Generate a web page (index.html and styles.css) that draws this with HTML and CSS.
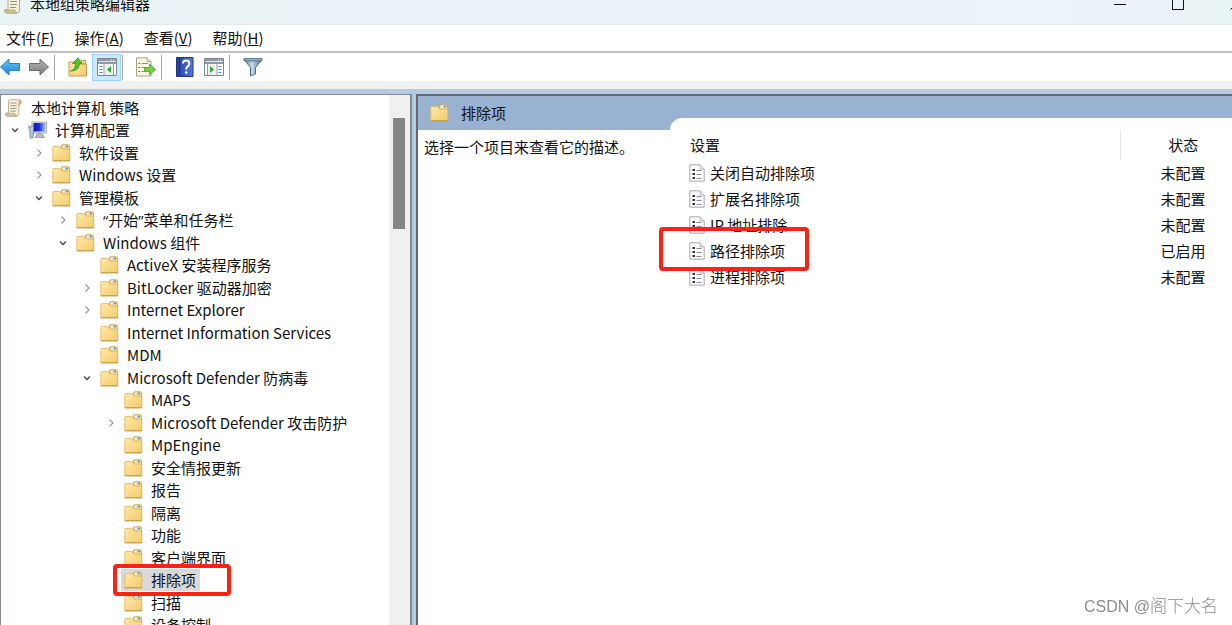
FILE: index.html
```html
<!DOCTYPE html>
<html lang="zh-CN">
<head>
  <meta charset="UTF-8" />
  <title>本地组策略编辑器</title>
  <link rel="stylesheet" href="styles.css">
</head>
<body>

<svg class="sprite" aria-hidden="true">
  <defs>
    <linearGradient id="gFolder" x1="0" y1="0" x2="1" y2="1">
      <stop offset="0" stop-color="#ffe9a8" />
      <stop offset="1" stop-color="#f3cb6c" />
    </linearGradient>
    <linearGradient id="gBlue" x1="0" y1="0" x2="0" y2="1">
      <stop offset="0" stop-color="#6cc8f8" />
      <stop offset="1" stop-color="#1583d6" />
    </linearGradient>
    <linearGradient id="gGray" x1="0" y1="0" x2="0" y2="1">
      <stop offset="0" stop-color="#b5b5b5" />
      <stop offset="1" stop-color="#7c7c7c" />
    </linearGradient>
    <linearGradient id="gHelp" x1="0" y1="0" x2="1" y2="0">
      <stop offset="0" stop-color="#243f9c" />
      <stop offset="1" stop-color="#4f7ae0" />
    </linearGradient>
    <linearGradient id="gScreen" x1="0" y1="0" x2="1" y2="0">
      <stop offset="0" stop-color="#0a12b4" />
      <stop offset="0.5" stop-color="#1d32e0" />
      <stop offset="1" stop-color="#a9c6fb" />
    </linearGradient>
    <linearGradient id="gFunnel" x1="0" y1="0" x2="1" y2="0">
      <stop offset="0" stop-color="#5d7f99" />
      <stop offset="0.45" stop-color="#c5dbe8" />
      <stop offset="1" stop-color="#4a6b85" />
    </linearGradient>
  </defs>
  <symbol id="folder" viewBox="0 0 19 18">
    <path d="M9.500 5 V1.500 Q9.500 .8 10.500 .8 H16 Q17.500 .8 17.500 2.500 V16 H9.500Z" fill="#f3d58c" stroke="#cda659" />
    <path d="M11 2.500 H16" stroke="#fff" stroke-width="1.600" />
    <path d="M13.500 2.500 H16" stroke="#3d93df" stroke-width="1.600" />
    <path d="M.8 3.500 Q.8 2.500 2 2.500 H8 L10 5.200 H17.800 V16.800 H.8Z" fill="url(#gFolder)" stroke="#deb662" stroke-width=".8" />
    <path d="M1 16.800 H18" stroke="#bf9442" />
  </symbol>
  <symbol id="scroll" viewBox="0 0 19 20">
    <path d="M4 2.500 Q4 .8 6 .8 H16 Q18.300 1 18 4 Q17.700 6 15.500 5.800 V16 Q15.500 19 12.500 19 H3 Q.5 19 .7 16 L4 15.500Z" fill="#f7f1d9" stroke="#b8aa83" />
    <path d="M15.500 6 V3 Q15.800 1 17 1.500 Q18.600 2.500 17.500 5 Q17 6 15.500 6Z" fill="#d3c093" stroke="#a9976b" stroke-width=".7" />
    <path d="M.7 16 H11 Q11 19 13 19 H3 Q.5 19 .7 16Z" fill="#d6c79b" stroke="#a9976b" stroke-width=".7" />
    <path d="M6 4.500 H13 M6 7.500 H13 M6 10.500 H13 M6 13.500 H12" stroke="#8f8f8f" />
  </symbol>
  <symbol id="computer" viewBox="0 0 19 18">
    <path d="M4 1 H18.500 V12 H4Z" fill="#dbe2ea" stroke="#9aa5b1" stroke-width=".8" />
    <path d="M5.500 2 H17.500 V10.500 H5.500Z" fill="url(#gScreen)" />
    <path d="M9 12.500 H14 L16.500 16.500 H7Z" fill="#b4bbc3" stroke="#878f98" stroke-width=".7" />
    <path d="M1 5 L2.500 6.500 L4 4.500 Q6.500 6 5.500 9 L5 16.500 Q3.500 18 2 16.500 L2 9 Q0 7.500 1 5Z" fill="#b3cce2" stroke="#57738f" stroke-width=".8" />
  </symbol>
  <symbol id="policy" viewBox="0 0 16 18">
    <path d="M.8 .8 H11 L15.200 5 V17.200 H.8Z" fill="#fafafa" stroke="#a8a8a8" />
    <path d="M11 1 V5 H15" fill="#e8e8e8" stroke="#b0b0b0" stroke-width=".8" />
    <path d="M3.500 5 H6 V7 H3.500Z M3.500 9 H6 V11 H3.500Z M3.500 13 H6 V15 H3.500Z" fill="#333" />
    <path d="M7.500 6.500 H12.500 M7.500 10.500 H12.500 M7.500 14.500 H12.500" stroke="#8c8c96" />
  </symbol>
  <symbol id="right" viewBox="0 0 16 16">
    <path d="M6.500 4.500 L10 8 L6.500 11.500" fill="none" stroke="#9a9a9a" stroke-width="1.200" />
  </symbol>
  <symbol id="down" viewBox="0 0 16 16">
    <path d="M5 6.500 L8 9.500 L11 6.500" fill="none" stroke="#444" stroke-width="1.300" />
  </symbol>
</svg>

<header class="title-bar">
  <svg class="app-icon"><use href="#scroll" /></svg>
  <h1 class="title">本地组策略编辑器</h1>
  <div class="caption-buttons">
    <button class="caption-btn" aria-label="最小化"><svg width="14" height="14" viewBox="0 0 14 14"><path d="M1 7.500 H13" stroke="#111" /></svg></button>
    <button class="caption-btn" aria-label="最大化"><svg width="14" height="14" viewBox="0 0 14 14"><rect x="1.500" y="1.500" width="11" height="11" fill="none" stroke="#111" /></svg></button>
    <button class="caption-btn" aria-label="关闭"><svg width="14" height="14" viewBox="0 0 14 14"><path d="M1.500 1.500 L12.500 12.500 M12.500 1.500 L1.500 12.500" stroke="#111" /></svg></button>
  </div>
</header>

<nav class="menu-bar">
  <button class="menu-btn">文件(<u>F</u>)</button>
  <button class="menu-btn">操作(<u>A</u>)</button>
  <button class="menu-btn">查看(<u>V</u>)</button>
  <button class="menu-btn">帮助(<u>H</u>)</button>
</nav>

<div class="toolbar">
  <button class="tool-btn" aria-label="后退">
    <svg width="22" height="20" viewBox="0 0 22 20"><path d="M1.500 10 L10 2 V6.500 H20.500 V13.500 H10 V18Z" fill="url(#gBlue)" stroke="#2a7fc0" /></svg>
  </button>
  <button class="tool-btn" aria-label="前进">
    <svg width="22" height="20" viewBox="0 0 22 20"><path d="M20.500 10 L12 2 V6.500 H1.500 V13.500 H12 V18Z" fill="url(#gGray)" stroke="#6c6c6c" /></svg>
  </button>
  <span class="separator"></span>
  <button class="tool-btn" aria-label="上一级">
    <svg width="20" height="20" viewBox="0 0 20 20">
      <path d="M1 5 H8 L10 7 H18.500 V19 H1Z" fill="url(#gFolder)" stroke="#c79d4c" />
      <path d="M13 3.500 H17.500 V7 H13Z" fill="#f2d48a" stroke="#c79d4c" />
      <path d="M2.500 14 Q7 13 8 6.500 H4.500 L10 1 L14 6.500 H11.500 Q11 14 2.500 14Z" fill="#4fc42c" stroke="#2f961c" stroke-width=".8" />
    </svg>
  </button>
  <button class="tool-btn active" aria-label="显示/隐藏控制台树">
    <svg width="20" height="18" viewBox="0 0 20 18">
      <path d="M.5 .5 H19.500 V17.500 H.5Z" fill="#fff" stroke="#7d8590" />
      <path d="M1 1 H19 V6 H1Z" fill="#8e98a6" />
      <path d="M1.500 3.500 H19" stroke="#dfe5eb" />
      <path d="M14 2 H18" stroke="#fff" stroke-dasharray="1" />
      <path d="M7 6 V17" stroke="#8e98a6" />
      <path d="M2.500 8.500 H5.500 M2.500 11.500 H5.500 M2.500 14.500 H5.500" stroke="#4f7fc0" />
      <path d="M8 7 H16 V17 H8Z" fill="#edf1f5" />
      <path d="M16.500 6 V17" stroke="#8e98a6" />
      <path d="M14 8 V15 L10 11.500Z" fill="#36a52c" />
    </svg>
  </button>
  <span class="separator"></span>
  <button class="tool-btn" aria-label="导出列表">
    <svg width="22" height="20" viewBox="0 0 22 20">
      <path d="M1.500 .8 H12 L16 4.500 V19 H1.500Z" fill="#fcf7df" stroke="#a9a28a" />
      <path d="M12 1 V4.500 H16" fill="#e8dfbd" stroke="#a9a28a" stroke-width=".8" />
      <path d="M3.500 6.500 H5 M3.500 10.500 H5 M3.500 14.500 H5" stroke="#555" />
      <path d="M6.500 6.500 H13 M6.500 10.500 H11 M6.500 14.500 H11" stroke="#8e8e8e" />
      <path d="M9.500 10.500 H14.500 V7 L20.500 12.500 L14.500 18 V14.500 H9.500Z" fill="#6ed33d" stroke="#4aa629" stroke-width=".8" />
    </svg>
  </button>
  <span class="separator"></span>
  <button class="tool-btn" aria-label="帮助">
    <svg width="18" height="20" viewBox="0 0 18 20">
      <path d="M.5 .5 H17 V19.500 H.5Z" fill="url(#gHelp)" stroke="#22357c" />
      <path d="M3.500 1 V19" stroke="#18307e" />
      <path d="M7 6.500 Q7 3.500 10 3.500 Q13.300 3.500 13.300 6.500 Q13.300 8.500 11.500 9.500 Q10.200 10.500 10.200 12.500" fill="none" stroke="#fff" stroke-width="2" />
      <circle cx="10.200" cy="15.500" r="1.300" fill="#fff" />
    </svg>
  </button>
  <button class="tool-btn" aria-label="显示/隐藏操作窗格">
    <svg width="20" height="18" viewBox="0 0 20 18">
      <path d="M.5 .5 H19.500 V17.500 H.5Z" fill="#fff" stroke="#7d8590" />
      <path d="M1 1 H19 V6 H1Z" fill="#8e98a6" />
      <path d="M1.500 3.500 H19" stroke="#dfe5eb" />
      <path d="M14 2 H18" stroke="#fff" stroke-dasharray="1" />
      <path d="M4 7 H12 V17 H4Z" fill="#edf1f5" />
      <path d="M3.500 6 V17 M13 6 V17" stroke="#8e98a6" />
      <path d="M14.500 8.500 H17.500 M14.500 11.500 H17.500 M14.500 14.500 H17.500" stroke="#4f7fc0" />
      <path d="M6 8 V15 L10 11.500Z" fill="#36a52c" />
    </svg>
  </button>
  <span class="separator"></span>
  <button class="tool-btn" aria-label="筛选器">
    <svg width="20" height="20" viewBox="0 0 20 20">
      <path d="M1 2.500 H19 L12.500 10.500 V17 L7.500 19 V10.500Z" fill="url(#gFunnel)" stroke="#4d6d87" />
      <path d="M1 1.500 H19 V4 H1Z" fill="#8eacc1" stroke="#4d6d87" stroke-width=".8" />
    </svg>
  </button>
</div>

<main class="console">
  <section class="tree-pane">
    <ul class="tree" role="tree">
      <li class="node level-0"><span class="label"><svg class="icon"><use href="#scroll" /></svg>本地计算机 策略</span></li>
      <li class="node level-1"><svg class="twisty"><use href="#down" /></svg><span class="label"><svg class="icon"><use href="#computer" /></svg>计算机配置</span></li>
      <li class="node level-2"><svg class="twisty"><use href="#right" /></svg><span class="label"><svg class="icon"><use href="#folder" /></svg>软件设置</span></li>
      <li class="node level-2"><svg class="twisty"><use href="#right" /></svg><span class="label"><svg class="icon"><use href="#folder" /></svg>Windows 设置</span></li>
      <li class="node level-2"><svg class="twisty"><use href="#down" /></svg><span class="label"><svg class="icon"><use href="#folder" /></svg>管理模板</span></li>
      <li class="node level-3"><svg class="twisty"><use href="#right" /></svg><span class="label"><svg class="icon"><use href="#folder" /></svg><span><span class="quote">“</span>开始<span class="quote">”</span>菜单和任务栏</span></span></li>
      <li class="node level-3"><svg class="twisty"><use href="#down" /></svg><span class="label"><svg class="icon"><use href="#folder" /></svg>Windows 组件</span></li>
      <li class="node level-4"><svg class="twisty"></svg><span class="label"><svg class="icon"><use href="#folder" /></svg>ActiveX 安装程序服务</span></li>
      <li class="node level-4"><svg class="twisty"><use href="#right" /></svg><span class="label"><svg class="icon"><use href="#folder" /></svg>BitLocker 驱动器加密</span></li>
      <li class="node level-4"><svg class="twisty"><use href="#right" /></svg><span class="label"><svg class="icon"><use href="#folder" /></svg>Internet Explorer</span></li>
      <li class="node level-4"><svg class="twisty"></svg><span class="label"><svg class="icon"><use href="#folder" /></svg>Internet Information Services</span></li>
      <li class="node level-4"><svg class="twisty"></svg><span class="label"><svg class="icon"><use href="#folder" /></svg>MDM</span></li>
      <li class="node level-4"><svg class="twisty"><use href="#down" /></svg><span class="label"><svg class="icon"><use href="#folder" /></svg>Microsoft Defender 防病毒</span></li>
      <li class="node level-5"><svg class="twisty"></svg><span class="label"><svg class="icon"><use href="#folder" /></svg>MAPS</span></li>
      <li class="node level-5"><svg class="twisty"><use href="#right" /></svg><span class="label"><svg class="icon"><use href="#folder" /></svg>Microsoft Defender 攻击防护</span></li>
      <li class="node level-5"><svg class="twisty"></svg><span class="label"><svg class="icon"><use href="#folder" /></svg>MpEngine</span></li>
      <li class="node level-5"><svg class="twisty"></svg><span class="label"><svg class="icon"><use href="#folder" /></svg>安全情报更新</span></li>
      <li class="node level-5"><svg class="twisty"></svg><span class="label"><svg class="icon"><use href="#folder" /></svg>报告</span></li>
      <li class="node level-5"><svg class="twisty"></svg><span class="label"><svg class="icon"><use href="#folder" /></svg>隔离</span></li>
      <li class="node level-5"><svg class="twisty"></svg><span class="label"><svg class="icon"><use href="#folder" /></svg>功能</span></li>
      <li class="node level-5"><svg class="twisty"></svg><span class="label"><svg class="icon"><use href="#folder" /></svg>客户端界面</span></li>
      <li class="node level-5 marked"><svg class="twisty"></svg><span class="label selected"><svg class="icon"><use href="#folder" /></svg>排除项</span></li>
      <li class="node level-5"><svg class="twisty"></svg><span class="label"><svg class="icon"><use href="#folder" /></svg>扫描</span></li>
      <li class="node level-5"><svg class="twisty"></svg><span class="label"><svg class="icon"><use href="#folder" /></svg>设备控制</span></li>
    </ul>
    <div class="scrollbar"><div class="thumb"></div></div>
  </section>

  <section class="result-pane">
    <h2 class="result-header"><svg class="icon"><use href="#folder" /></svg>排除项</h2>
    <div class="result-body">
      <p class="description">选择一个项目来查看它的描述。</p>
      <div class="list">
        <table class="settings">
          <thead>
            <tr><th>设置</th><th class="state">状态</th></tr>
          </thead>
          <tbody>
            <tr><td><span class="setting"><svg class="policy"><use href="#policy" /></svg>关闭自动排除项</span></td><td class="state">未配置</td></tr>
            <tr><td><span class="setting"><svg class="policy"><use href="#policy" /></svg>扩展名排除项</span></td><td class="state">未配置</td></tr>
            <tr><td><span class="setting"><svg class="policy"><use href="#policy" /></svg>IP 地址排除</span></td><td class="state">未配置</td></tr>
            <tr><td><span class="setting marked"><svg class="policy"><use href="#policy" /></svg>路径排除项</span></td><td class="state">已启用</td></tr>
            <tr><td><span class="setting"><svg class="policy"><use href="#policy" /></svg>进程排除项</span></td><td class="state">未配置</td></tr>
          </tbody>
        </table>
      </div>
    </div>
  </section>
</main>

<div class="watermark"><span class="site">CSDN @</span>阁下大名</div>

</body>
</html>
```

FILE: styles.css
```css
*,
*::after {
  box-sizing: border-box;
}
body {
  display: flex;
  flex-direction: column;
  height: 100vh;
  margin: 0;
  overflow: hidden;
  background: #fff;
  color: #111;
  font-family: "Noto Sans CJK SC", sans-serif;
  font-size: 15px;
  line-height: 22px;
}
button {
  padding: 0;
  border: none;
  background: none;
  color: inherit;
  font: inherit;
}
h1, h2, p, ul {
  margin: 0;
  padding: 0;
  font-size: 15px;
  font-weight: normal;
}
svg {
  display: block;
  flex: none;
}
.sprite {
  position: absolute;
  width: 0;
  height: 0;
}

/* title bar, its upper part is off the screen */
.title-bar {
  display: flex;
  flex: none;
  align-items: center;
  height: 41px;
  margin-top: -16px;
  padding-left: 4px;
  background: linear-gradient(90deg, #e9f4f6, #eaf3f8 60%, #ecf3fb 85%, #e9f4f5);
  border-bottom: 1px solid #e3e9ec;
}
.app-icon {
  width: 19px;
  height: 20px;
}
.title {
  flex: 1;
  margin-left: 7px;
}
.caption-buttons {
  display: flex;
  margin-right: -33px;
}
.caption-btn {
  display: flex;
  justify-content: center;
  width: 58px;
}

.menu-bar {
  display: flex;
  flex: none;
  gap: 20px;
  height: 28px;
  padding: 2px 6px;
  border-bottom: 2px solid #c2c2c2;
}

.toolbar {
  display: flex;
  flex: none;
  align-items: center;
  height: 36px;
  border-bottom: 8px solid #f0f0f0;
}
.tool-btn {
  display: flex;
  align-items: center;
  justify-content: center;
  width: 29px;
  height: 27px;
}
.tool-btn:first-child {
  margin-left: -5px;
}
.tool-btn.active {
  border: 1px solid #99d1ff;
  background: #cce8ff;
}
.separator {
  width: 1px;
  height: 25px;
  margin: 0 8px 0 1px;
  background: #a5a5a5;
}

.console {
  display: flex;
  flex: 1;
  gap: 4px;
  min-height: 0;
  padding-top: 5px;
  background: #b5cbe5;
}
.tree-pane {
  display: flex;
  flex: none;
  width: 412px;
  border: 1px solid #83898f;
  border-width: 1px 2px 0 1px;
  background: #fff;
}
.tree {
  flex: 1;
  padding-top: 1px;
  list-style: none;
}
.node {
  position: relative;
  display: flex;
  align-items: center;
  gap: 2px;
  height: 22px;
}
.node:nth-child(odd) {
  height: 23px;
}
.level-1 {
  padding-left: 6px;
}
.level-2 {
  padding-left: 30px;
}
.level-3 {
  padding-left: 54px;
}
.level-4 {
  padding-left: 78px;
}
.level-5 {
  padding-left: 102px;
}
.twisty {
  width: 16px;
  height: 16px;
}
.label {
  display: flex;
  align-items: center;
  gap: 8px;
  padding: 0 4px 0 3px;
  white-space: nowrap;
}
.quote {
  font-family: "Open Sans", sans-serif;
}
.selected {
  background: #d9d9d9;
}
.icon {
  width: 19px;
  height: 18px;
}
.scrollbar {
  width: 21px;
  padding: 23px 5px 0 4px;
  background: #f0f0f0;
}
.thumb {
  height: 111px;
  background: #858585;
}

.result-pane {
  display: flex;
  flex: 1;
  flex-direction: column;
  min-width: 0;
  border: 2px solid #686868;
  border-width: 2px 0 0 2px;
  background: #fff;
}
.result-header {
  display: flex;
  flex: none;
  align-items: center;
  gap: 12px;
  height: 34px;
  padding-left: 12px;
  background: #99b2d1;
}
.result-body {
  display: flex;
  flex: 1;
}
.description {
  width: 252px;
  padding: 6px;
}
.list {
  flex: 1;
  margin-top: -12px;
  border-top-left-radius: 12px;
  background: #fff;
}
.settings {
  width: 100%;
  margin-top: 12px;
  border-collapse: collapse;
}
.settings th {
  height: 30px;
  padding: 0 0 0 20px;
  font-weight: normal;
  text-align: left;
}
.settings td {
  height: 26px;
  padding: 0 0 0 19px;
}
.settings .state {
  width: 112px;
  padding-left: 14px;
  text-align: center;
}
.settings th.state {
  border-left: 1px solid #e5e5e5;
}
.setting {
  position: relative;
  display: flex;
  align-items: center;
  gap: 5px;
}
.policy {
  width: 16px;
  height: 18px;
}

/* red highlight frames */
.marked::after {
  content: "";
  position: absolute;
  z-index: 1;
  border: 4px solid #fc2314;
  border-radius: 4px;
}
.node.marked::after {
  top: -5px;
  left: 112px;
  width: 118px;
  height: 32px;
}
.setting.marked::after {
  top: -13px;
  left: -30px;
  width: 150px;
  height: 44px;
}

.watermark {
  position: fixed;
  right: 14px;
  bottom: 7px;
  color: #8c8c8c;
  font-size: 17px;
  font-weight: 300;
}
.site {
  font-family: "Liberation Sans", Arial, sans-serif;
  font-size: 16px;
}
```
